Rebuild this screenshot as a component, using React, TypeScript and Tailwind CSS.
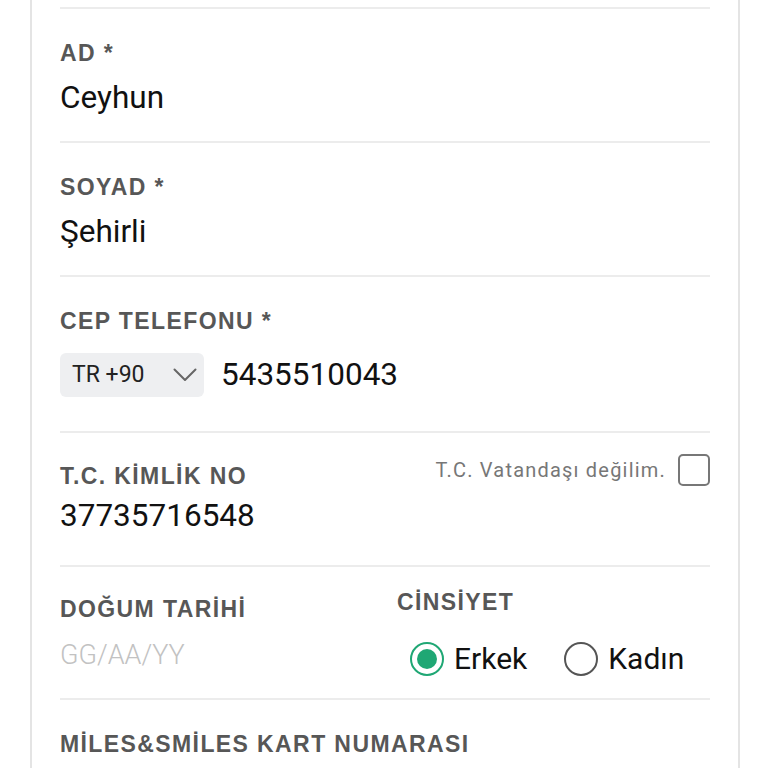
import React from "react";

const font = { fontFamily: "Roboto, 'Noto Sans', Arial, sans-serif" };

function Divider() {
  return <div className="h-[2px] w-full bg-[#ececec]" />;
}

function Label({ children }: { children: React.ReactNode }) {
  return (
    <div
      className="text-[23px] leading-[26px] font-bold text-[#575757] tracking-[1.4px] whitespace-nowrap"
      style={{ fontFamily: "'Liberation Sans', Arial, sans-serif" }}
    >
      {children}
    </div>
  );
}

function Value({ children }: { children: React.ReactNode }) {
  return <div className="text-[31.5px] leading-[36px] text-[#111]">{children}</div>;
}

function Radio({ checked, label }: { checked: boolean; label: string }) {
  return (
    <div className="flex items-center h-[34px]">
      <div
        className={
          checked
            ? "w-[34px] h-[34px] rounded-full border-2 border-[#1fa774] flex items-center justify-center"
            : "w-[34px] h-[34px] rounded-full border-2 border-[#555] flex items-center justify-center"
        }
      >
        {checked && <div className="w-[20px] h-[20px] rounded-full bg-[#1fa774]" />}
      </div>
      <span className="ml-[10px] text-[30px] leading-[34px] text-[#111]">{label}</span>
    </div>
  );
}

export default function App() {
  return (
    <div className="min-h-screen bg-white overflow-hidden" style={font}>
      <div className="ml-[30px] w-[710px] min-h-[800px] border-x-2 border-[#e4e4e4] px-[28px] pt-[7px]">
        <Divider />
        <div className="pt-[31px] pb-[25px]">
          <Label>AD *</Label>
          <div className="mt-[14px]">
            <Value>Ceyhun</Value>
          </div>
        </div>
        <Divider />
        <div className="pt-[31px] pb-[25px]">
          <Label>SOYAD *</Label>
          <div className="mt-[14px]">
            <Value>Şehirli</Value>
          </div>
        </div>
        <Divider />
        <div className="pt-[31px] pb-[34px]">
          <Label>CEP TELEFONU *</Label>
          <div className="mt-[19px] flex items-center">
            <div className="w-[144px] h-[44px] bg-[#eeeff1] rounded-[6px] pl-[12px] pr-[7px] flex items-center justify-between">
              <span className="text-[23px] leading-[26px] text-[#222]">TR +90</span>
              <svg width="24" height="14" viewBox="0 0 24 14" fill="none">
                <path d="M1.5 1.5 L12 12 L22.5 1.5" stroke="#666" strokeWidth="2" strokeLinecap="round" strokeLinejoin="round" />
              </svg>
            </div>
            <span className="ml-[17px] text-[31.5px] leading-[36px] text-[#111]">5435510043</span>
          </div>
        </div>
        <Divider />
        <div className="pt-[21px] pb-[31px]">
          <div className="flex justify-between items-start">
            <div className="mt-[9px]">
              <Label>T.C. KİMLİK NO</Label>
            </div>
            <div className="flex items-center gap-[12px]">
              <span className="text-[20px] leading-[24px] text-[#777] tracking-[1.2px]">T.C. Vatandaşı değilim.</span>
              <div className="w-[32px] h-[32px] border-2 border-[#777] rounded-[5px]" />
            </div>
          </div>
          <div className="mt-[9px]">
            <Value>37735716548</Value>
          </div>
        </div>
        <Divider />
        <div className="pt-[22px] pb-[22px] flex">
          <div className="w-[337px] mt-[7px]">
            <Label>DOĞUM TARİHİ</Label>
            <div className="mt-[17px] text-[27px] leading-[32px] font-light text-[#c2c2c2]">GG/AA/YY</div>
          </div>
          <div>
            <Label>CİNSİYET</Label>
            <div className="mt-[27px] flex items-center gap-[37px] ml-[13px]">
              <Radio checked={true} label="Erkek" />
              <Radio checked={false} label="Kadın" />
            </div>
          </div>
        </div>
        <Divider />
        <div className="pt-[31px] pb-[25px]">
          <Label>MİLES&amp;SMİLES KART NUMARASI</Label>
          <div className="mt-[14px] h-[36px]" />
        </div>
      </div>
    </div>
  );
}
